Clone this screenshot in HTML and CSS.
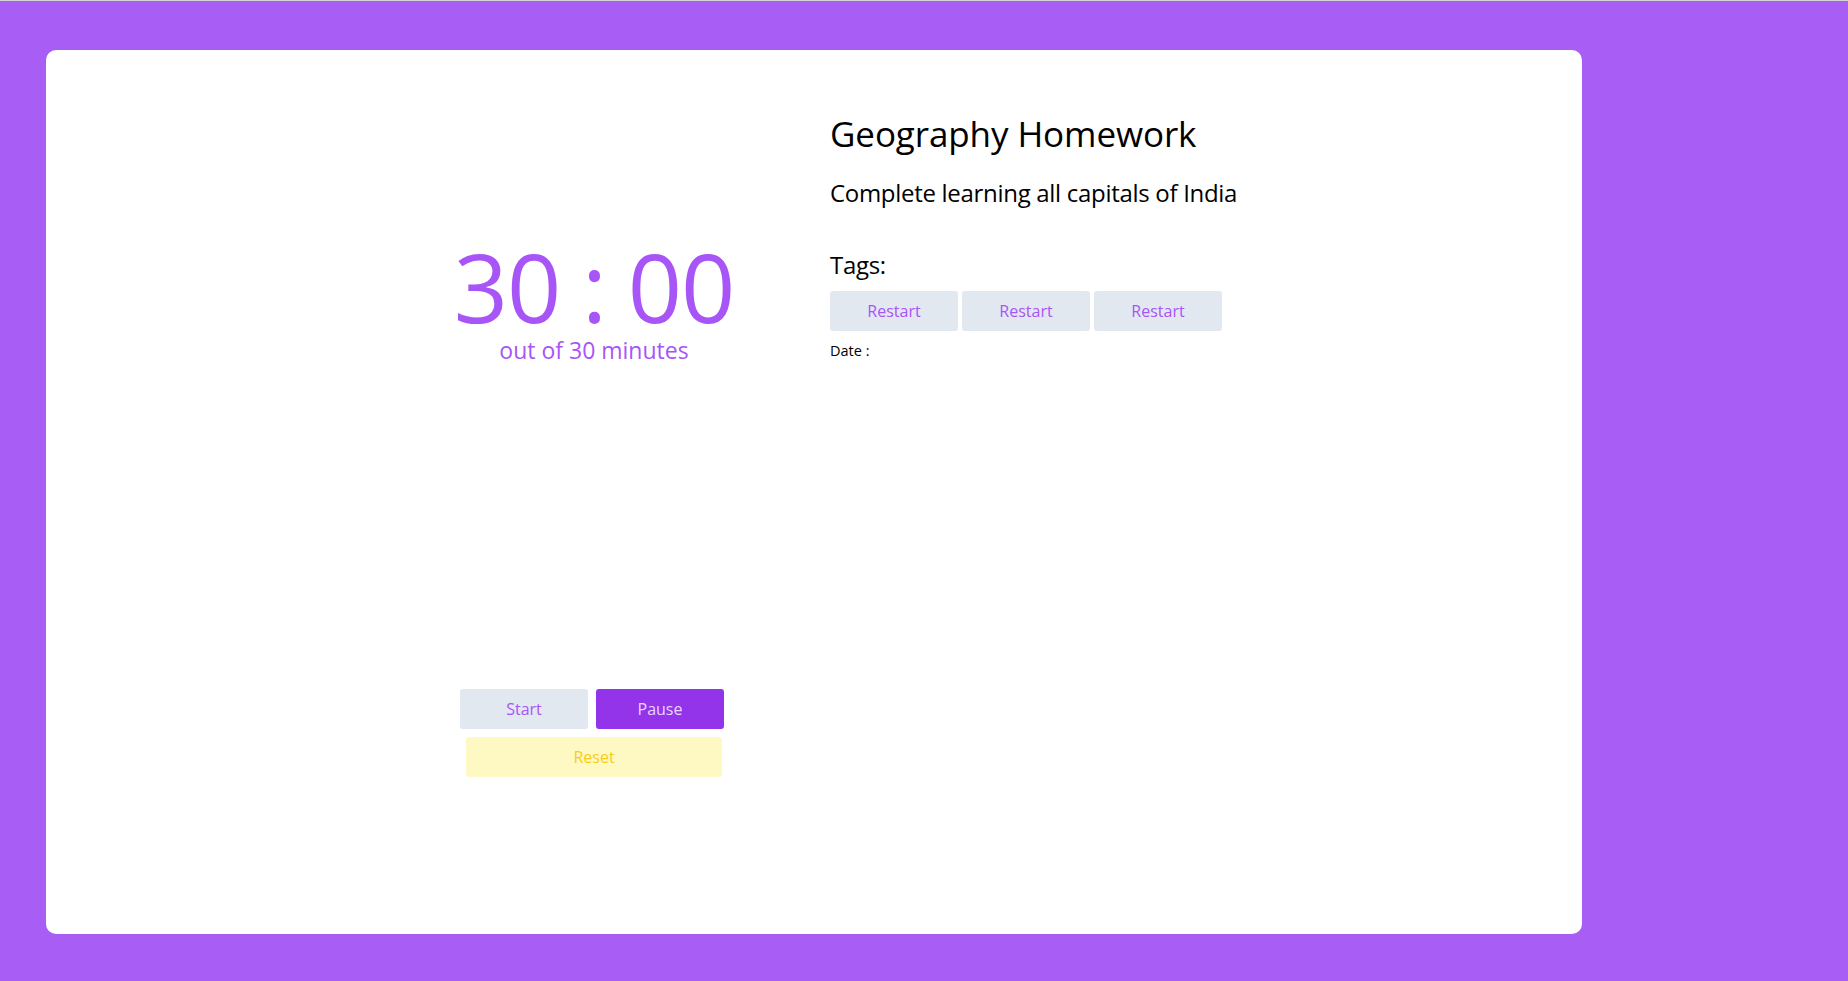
FILE: index.html
```html
<!DOCTYPE html>
<html lang="en">
<head>
<meta charset="utf-8">
<title>Task Timer</title>
<link rel="stylesheet" href="styles.css">
</head>
<body>
<div class="topline"></div>
<main class="page">
  <section class="card">
    <div class="timer-col">
      <div class="timer">
        <div class="time">30 : 00</div>
        <div class="sub">out of 30 minutes</div>
      </div>
      <div class="controls">
        <div class="row">
          <button class="btn start">Start</button>
          <button class="btn pause">Pause</button>
        </div>
        <button class="btn reset">Reset</button>
      </div>
    </div>
    <div class="info-col">
      <h1 class="title">Geography Homework</h1>
      <p class="desc">Complete learning all capitals of India</p>
      <h2 class="tags-label">Tags:</h2>
      <div class="tags">
        <button class="btn tag">Restart</button>
        <button class="btn tag">Restart</button>
        <button class="btn tag">Restart</button>
      </div>
      <p class="date">Date :</p>
    </div>
  </section>
</main>
</body>
</html>
```
FILE: styles.css
```css
html, body {
  margin: 0;
  padding: 0;
  background: #a85ef5;
  font-family: "Open Sans", "Noto Sans", sans-serif;
}
body {
  min-height: 100vh;
}
.topline {
  height: 1px;
  background: #d4d4d4;
}
.page {
  padding: 49px 0 47px 46px;
}
.card {
  box-sizing: border-box;
  width: 1536px;
  height: 884px;
  background: #ffffff;
  border-radius: 10px;
  padding: 64px;
  display: grid;
  grid-template-columns: 1fr 1fr;
  column-gap: 32px;
}
.timer-col {
  display: flex;
  flex-direction: column;
  align-items: center;
  width: 264px;
  margin-left: 350px;
}
.timer {
  margin-top: 124px;
  margin-left: 4px;
  display: flex;
  flex-direction: column;
  align-items: center;
  color: #a855f7;
}
.time {
  font-size: 95px;
  line-height: 96px;
  letter-spacing: -1px;
  word-spacing: -2px;
  white-space: nowrap;
}
.sub {
  margin-top: 2px;
  font-size: 23px;
  line-height: 28px;
  white-space: nowrap;
}
.controls {
  margin-top: 325px;
  display: flex;
  flex-direction: column;
  align-items: center;
  gap: 8px;
}
.row {
  display: flex;
  gap: 8px;
}
.btn {
  font-family: inherit;
  font-size: 16px;
  border: none;
  border-radius: 3px;
  height: 40px;
  width: 128px;
  padding: 0;
  cursor: pointer;
}
.start {
  background: #e2e8f0;
  color: #a855f7;
}
.pause {
  background: #9333ea;
  color: #e9d5ff;
}
.reset {
  width: 256px;
  margin-left: 4px;
  background: #fef9c3;
  color: #facc15;
}
.info-col {
  color: #000;
}
.title {
  margin: 0;
  font-size: 35px;
  line-height: 40px;
  letter-spacing: -0.1px;
  font-weight: 400;
}
.desc {
  margin: 23px 0 0;
  font-size: 24px;
  line-height: 32px;
  letter-spacing: -0.3px;
}
.tags-label {
  margin: 40px 0 0;
  font-size: 24px;
  line-height: 32px;
  letter-spacing: -0.3px;
  font-weight: 400;
}
.tags {
  margin-top: 10px;
  display: flex;
  gap: 4px;
}
.tag {
  background: #e2e8f0;
  color: #a855f7;
}
.date {
  margin: 10px 0 0;
  font-size: 14.5px;
  line-height: 20px;
}
```
